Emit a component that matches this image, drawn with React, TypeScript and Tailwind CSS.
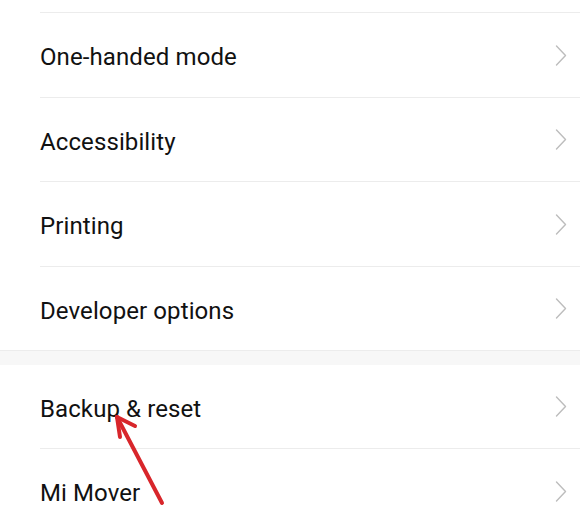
import React from "react";

function Chevron() {
  return (
    <svg width="12" height="21" viewBox="0 0 12 21" fill="none" className="shrink-0">
      <path d="M1.5 1 L10.5 10.5 L1.5 20" stroke="#bdbdbd" strokeWidth="1.4" strokeLinecap="round" strokeLinejoin="round" />
    </svg>
  );
}

function Row({ label, h, divider = true }: { label: string; h: string; divider?: boolean }) {
  return (
    <div className={`ml-[40px] ${divider ? "border-t border-[#ececec]" : ""}`}>
      <div className={`${h} flex items-center justify-between pr-[13px]`}>
        <span className="mt-[4px] text-[24px] leading-none text-[#111111] tracking-[0.1px]" style={{ fontFamily: "Roboto, 'Noto Sans', sans-serif" }}>
          {label}
        </span>
        <Chevron />
      </div>
    </div>
  );
}

export default function App() {
  return (
    <div className="relative w-[580px] h-[517px] overflow-hidden bg-white">
      <div className="h-[12px]" />
      <Row label="One-handed mode" h="h-[84px]" />
      <Row label="Accessibility" h="h-[83px]" />
      <Row label="Printing" h="h-[84px]" />
      <Row label="Developer options" h="h-[83px]" />
      <div className="h-[15px] border-t border-[#ececec] bg-[#f7f7f7]" />
      <Row label="Backup & reset" h="h-[83px]" divider={false} />
      <Row label="Mi Mover" h="h-[84px]" />
      <svg className="absolute left-0 top-0 pointer-events-none" width="580" height="517" viewBox="0 0 580 517">
        <g stroke="#d8262b" strokeWidth="4" strokeLinecap="round" strokeLinejoin="round" fill="none">
          <path d="M162 503 L117 417" />
          <path d="M117 417 L135 426" />
          <path d="M117 417 L120 437" />
        </g>
      </svg>
    </div>
  );
}
